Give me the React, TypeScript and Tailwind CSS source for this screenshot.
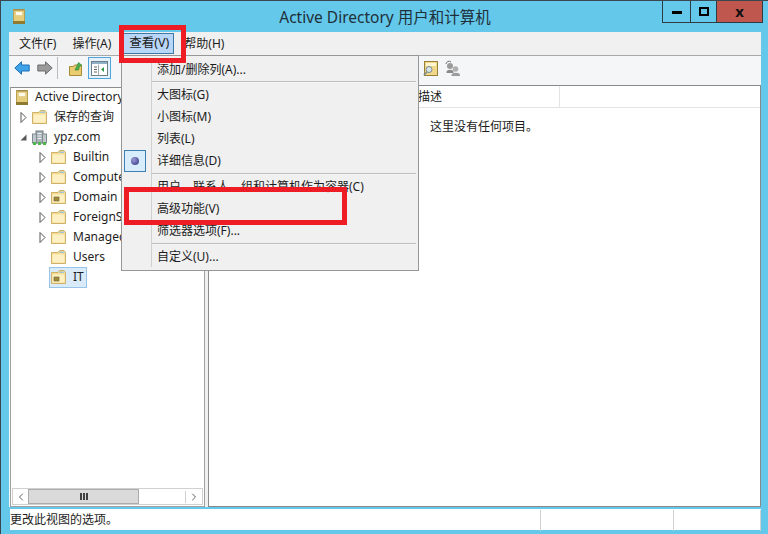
import { ChevronLeft, ChevronRight } from "lucide-react";

const font = { fontFamily: '"Noto Sans", "Noto Sans CJK SC", sans-serif' };

function AppIcon({ className = "" }: { className?: string }) {
  return (
    <svg viewBox="0 0 12 15" className={className}>
      <rect x="0" y="0" width="12" height="15" fill="#e6cd7c" />
      <rect x="0" y="0" width="12" height="1.500" fill="#a08c48" />
      <rect x="0" y="0" width="1" height="15" fill="#b8a050" />
      <rect x="11" y="0" width="1" height="15" fill="#b8a050" />
      <rect x="2.500" y="2.500" width="7" height="4" fill="#fdfae8" stroke="#d8c070" strokeWidth="0.5" />
      <rect x="0" y="12" width="12" height="3" fill="#8f7a30" />
    </svg>
  );
}

function Folder({ locked = false }: { locked?: boolean }) {
  return (
    <svg viewBox="0 0 15 14" className="h-[14px] w-[15px] shrink-0">
      <path d="M0.500 13.500V2.500H7L8.500 0.500H13L14.500 2.500V13.500z" fill="#f6dd92" stroke="#cdb06a" />
      <path d="M9 1.500h3.500l1 1.500H8z" fill="#9fc4e0" />
      <path d="M1.500 4.500h12v8h-12z" fill="#fdf0c4" />
      {locked && <rect x="3" y="7" width="5" height="4" fill="#a08a3c" stroke="#6f5f28" strokeWidth="0.6" />}
    </svg>
  );
}

function Domain() {
  return (
    <svg viewBox="0 0 15 15" className="h-[15px] w-[15px] shrink-0">
      <rect x="4" y="1" width="7" height="12" fill="#aab4b8" stroke="#6f7b80" />
      <rect x="0.500" y="4" width="4" height="9" fill="#c0c8cc" stroke="#7f8a90" />
      <rect x="10.500" y="4" width="4" height="9" fill="#c0c8cc" stroke="#7f8a90" />
      <path d="M5.500 3.500h4M5.500 6h4M5.500 8.500h4" stroke="#eef2f4" />
      <rect x="1" y="12" width="3" height="3" fill="#4fb54a" />
      <rect x="11" y="12" width="3" height="3" fill="#4fb54a" />
      <rect x="6" y="12" width="3" height="3" fill="#4fb54a" />
    </svg>
  );
}

function Expander({ open = false }: { open?: boolean }) {
  return open ? (
    <svg viewBox="0 0 7 7" className="h-[7px] w-[7px] shrink-0">
      <path d="M6.500 0.500V6.500H0.500z" fill="#595959" />
    </svg>
  ) : (
    <svg viewBox="0 0 7 11" className="h-[11px] w-[7px] shrink-0">
      <path d="M1 0.500L6 5.500L1 10.500z" fill="#fff" stroke="#555" />
    </svg>
  );
}

function Arrow({ dir, fill, stroke }: { dir: "left" | "right"; fill: string; stroke: string }) {
  return (
    <svg viewBox="0 0 16 14" className={dir === "right" ? "h-[14px] w-[16px] rotate-180" : "h-[14px] w-[16px]"}>
      <path d="M0.800 7L7.500 0.800V4H15.200V10H7.500V13.200z" fill={fill} stroke={stroke} />
    </svg>
  );
}

function TreeRow({
  depth,
  expander,
  icon,
  label,
  selected,
}: {
  depth: number;
  expander?: "open" | "closed";
  icon: React.ReactNode;
  label: string;
  selected?: boolean;
}) {
  return (
    <div className="flex h-5 items-center whitespace-nowrap" style={{ paddingLeft: depth }}>
      <div className="flex w-[12px] shrink-0 items-center">
        {expander && <Expander open={expander === "open"} />}
      </div>
      <div
        className={
          selected
            ? "-ml-[2px] -my-px flex h-[21px] w-[38px] shrink-0 items-center border border-[#99c4ea] bg-[#d9ebf9] pl-[1px]"
            : "flex items-center"
        }
      >
        {icon}
        <span className="ml-[7px] text-[12px] leading-none text-[#1e1e1e]">{label}</span>
      </div>
    </div>
  );
}

function MenuItem({ label, checked }: { label: string; checked?: boolean }) {
  return (
    <div className="flex h-[22px] items-center whitespace-nowrap">
      <div className="flex w-[30px] shrink-0 items-center pl-[2px]">
        {checked && (
          <div className="flex h-[22px] w-[22px] items-center justify-center border border-[#3e80b4] bg-[#d8edfb]">
            <div className="h-[8px] w-[8px] rounded-full bg-[radial-gradient(circle_at_35%_35%,#9a9ad8,#2f2f80)]" />
          </div>
        )}
      </div>
      <span className="pl-[5px] text-[12px] text-[#1c1c1c]">{label}</span>
    </div>
  );
}

function MenuSeparator({ tight }: { tight?: boolean }) {
  return (
    <div
      className={
        tight
          ? "ml-[30px] mr-[2px] mb-px h-[2px] border-t border-[#bdbdbd] bg-white/40"
          : "my-[1px] ml-[30px] mr-[2px] h-[2px] border-t border-[#bdbdbd] bg-white/40"
      }
    />
  );
}

export default function App() {
  return (
    <div
      className="relative flex h-[534px] w-[768px] flex-col overflow-hidden border-l border-t border-[#3a4650] bg-[#64c8ea]"
      style={font}
    >
      {/* title bar */}
      <div className="flex h-[31px] shrink-0 items-start pl-[12px]">
        <AppIcon className="mt-[8px] h-[15px] w-[12px]" />
        <div className="flex-1 pl-[83px] pt-[6px] text-center text-[15.5px] leading-[20px] text-[#20303a]">
          Active Directory 用户和计算机
        </div>
        <div className="mr-[5px] flex h-[22px] w-[101px] border border-t-0 border-[#2f3b44] text-[#111]">
          <div className="flex w-[28px] items-center justify-center border-r border-[#2f3b44]">
            <div className="mt-[2px] h-[3px] w-[10px] bg-black" />
          </div>
          <div className="flex w-[26px] items-center justify-center border-r border-[#2f3b44]">
            <div className="h-[9px] w-[10px] border-2 border-black" />
          </div>
          <div className="flex flex-1 items-center justify-center bg-[#c0574e] text-[15px] font-bold leading-none">
            x
          </div>
        </div>
      </div>

      {/* menu bar */}
      <div className="ml-[8px] mr-[7px] flex h-[23px] shrink-0 items-center bg-[#f0f0f0] text-[12px] text-[#1c1c1c]">
        <span className="ml-[10px]">文件(F)</span>
        <span className="ml-[16px]">操作(A)</span>
        <span className="ml-[11px] flex h-[21px] w-[52px] items-center justify-center border border-[#3d78a8] bg-[#b8d6f7] pl-[2px] text-[12.5px]">
          查看(V)
        </span>
        <span className="ml-[10px]">帮助(H)</span>
      </div>

      {/* toolbar */}
      <div className="ml-[8px] mr-[7px] flex h-[30px] shrink-0 items-center border-t border-[#a8a8a8] bg-[#f5f6f7] pb-[5px] pl-[5px]">
        <Arrow dir="left" fill="#3fa3e8" stroke="#1e6fb8" />
        <div className="ml-[7px]">
          <Arrow dir="right" fill="#9a9a9a" stroke="#6f6f6f" />
        </div>
        <div className="ml-[4px] h-[22px] w-px bg-[#bcbcbc]" />
        <svg viewBox="0 0 15 15" className="ml-[11px] h-[15px] w-[15px]">
          <path d="M0.500 14.500V5.500h4l1-1.500h7v10.500z" fill="#eacb70" stroke="#a88a3a" />
          <path d="M6 9L9.500 1.500L13 4.500L10.500 5.500L9.500 9z" fill="#4caf50" stroke="#2e7d32" strokeWidth="0.6" />
        </svg>
        <div className="ml-[4px] flex h-[22px] w-[23px] items-center justify-center border border-[#4ea6dc] bg-[#e4f1fb]">
          <svg viewBox="0 0 17 15" className="h-[15px] w-[17px]">
            <rect x="0.500" y="0.500" width="16" height="14" fill="#fff" stroke="#6f7f8a" />
            <rect x="1" y="1" width="15" height="2" fill="#8fb0c8" />
            <path d="M3 6h3M3 8.500h3M3 11h3" stroke="#606060" />
            <path d="M7.500 3.500v11" stroke="#9aa6ae" />
            <path d="M13 6v5L10 8.500z" fill="#2f9a4a" />
          </svg>
        </div>
        <div className="flex-1" />
        <svg viewBox="0 0 15 15" className="mr-[7px] h-[15px] w-[15px]">
          <rect x="1.500" y="0.500" width="13" height="14" fill="#f0d888" stroke="#96803a" />
          <rect x="3" y="2" width="10" height="3" fill="#fff6d0" />
          <circle cx="6" cy="8.500" r="3" fill="#d8e4ea" stroke="#7a8a90" />
          <path d="M4 11L0.800 14.200" stroke="#7a8a90" strokeWidth="1.500" />
        </svg>
        <svg viewBox="0 0 16 16" className="mr-[300px] h-[16px] w-[16px]">
          <path d="M1 4a3 3 0 0 1 5-2" fill="none" stroke="#707070" />
          <circle cx="5" cy="6" r="3" fill="#9a9a9a" />
          <path d="M1.500 12c0-3 7-3 7 0v1h-7z" fill="#8a8a8a" />
          <circle cx="10.500" cy="9" r="2.800" fill="#b0b0b0" />
          <path d="M6.500 15c0-3 8.500-3 8.500 0v1H6.500z" fill="#9c9c9c" />
        </svg>
      </div>

      {/* panes */}
      <div className="ml-[8px] mr-[7px] flex h-[422px] shrink-0 bg-[#f5f6f7] pl-px">
        <div className="mt-[2px] flex w-[195px] shrink-0 flex-col border border-[#a0a0a0] border-t-[#8c8c8c] bg-white">
          <div className="-mt-px flex-1 overflow-hidden">
            <TreeRow depth={5} icon={<AppIcon className="-ml-[12px] h-[15px] w-[12px] shrink-0" />} label="Active Directory 用户和计算机" />
            <TreeRow depth={9} expander="closed" icon={<Folder />} label="保存的查询" />
            <TreeRow depth={9} expander="open" icon={<Domain />} label="ypz.com" />
            <TreeRow depth={28} expander="closed" icon={<Folder />} label="Builtin" />
            <TreeRow depth={28} expander="closed" icon={<Folder />} label="Computers" />
            <TreeRow depth={28} expander="closed" icon={<Folder locked />} label="Domain Controllers" />
            <TreeRow depth={28} expander="closed" icon={<Folder />} label="ForeignSecurityPrincipals" />
            <TreeRow depth={28} expander="closed" icon={<Folder />} label="Managed Service Accounts" />
            <TreeRow depth={28} icon={<Folder />} label="Users" />
            <TreeRow depth={28} icon={<Folder locked />} label="IT" selected />
          </div>
          <div className="mx-[1px] mb-px flex h-[17px] shrink-0 items-center border border-[#d0d0d0] text-[#606060]">
            <div className="flex w-[15px] justify-center">
              <ChevronLeft className="h-[12px] w-[12px]" strokeWidth={2} />
            </div>
            <div className="flex h-full w-[111px] items-center justify-center gap-px border border-[#ababab] bg-[#dadada]">
              <div className="h-[7px] w-[2px] bg-[#404040]" />
              <div className="h-[7px] w-[2px] bg-[#404040]" />
              <div className="h-[7px] w-[2px] bg-[#404040]" />
            </div>
            <div className="flex-1" />
            <div className="flex w-[17px] justify-center border-l border-[#d0d0d0]">
              <ChevronRight className="h-[12px] w-[12px]" strokeWidth={2} />
            </div>
          </div>
        </div>
        <div className="w-[3px] shrink-0 bg-[#f0f0f0]" />
        <div className="flex flex-1 flex-col border border-[#8a8a8a] bg-white">
          <div className="flex h-[22px] shrink-0 items-center border-b border-[#e3e3e3] text-[12px] text-[#1c1c1c]">
            <span className="w-[120px] border-r border-[#e3e3e3] pl-[2px]">名称</span>
            <span className="w-[88px] border-r border-[#e3e3e3] pl-[2px]">类型</span>
            <span className="flex h-full w-[143px] items-center border-r border-[#e3e3e3] pl-[1px]">描述</span>
          </div>
          <div className="pl-[221px] pt-[10px] text-[12px] leading-[18px] text-[#1c1c1c]">这里没有任何项目。</div>
        </div>
      </div>

      {/* status bar */}
      <div className="ml-[9px] mr-[7px] mt-[2px] flex h-[21px] shrink-0 items-center bg-white text-[12px] text-[#1c1c1c]">
        <div className="flex h-full w-[530px] items-center">更改此视图的选项。</div>
        <div className="mt-px h-full w-[133px] border-l border-[#d0d0d0]" />
        <div className="mt-px h-full flex-1 border-x border-[#d0d0d0]" />
      </div>

      {/* open menu */}
      <div className="absolute left-[120px] top-[54px] w-[298px] border border-[#979797] bg-[#f0f0f0] pb-[2px] pt-[3px]">
        <div className="absolute bottom-[3px] left-[29px] top-[3px] w-px bg-[#d0d0d0]" />
        <MenuItem label="添加/删除列(A)..." />
        <MenuSeparator tight />
        <MenuItem label="大图标(G)" />
        <MenuItem label="小图标(M)" />
        <MenuItem label="列表(L)" />
        <MenuItem label="详细信息(D)" checked />
        <MenuSeparator />
        <MenuItem label="用户、联系人、组和计算机作为容器(C)" />
        <MenuItem label="高级功能(V)" />
        <MenuItem label="筛选器选项(F)..." />
        <MenuSeparator />
        <MenuItem label="自定义(U)..." />
      </div>

      {/* red annotations */}
      <div className="absolute left-[118px] top-[24px] h-[38px] w-[67px] border-[5px] border-[#ee1c25]" />
      <div className="absolute left-[123px] top-[186px] h-[38px] w-[223px] border-[5px] border-[#ee1c25]" />
    </div>
  );
}
